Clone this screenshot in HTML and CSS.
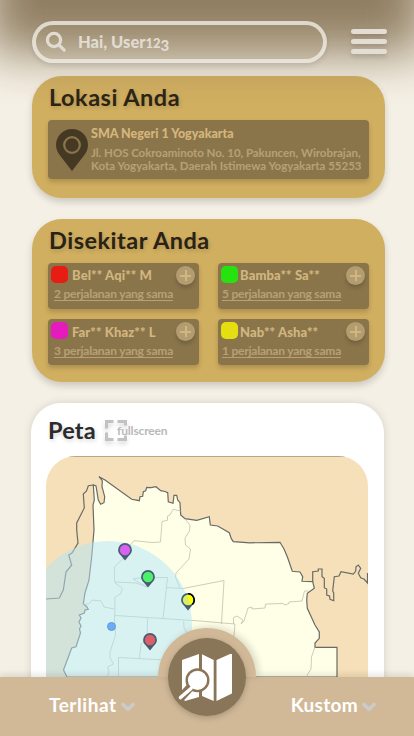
FILE: index.html
```html
<!DOCTYPE html>
<html lang="id">
<head>
<meta charset="utf-8">
<title>Peta</title>
<link rel="stylesheet" href="styles.css">
</head>
<body>
<div class="app">
  <header class="topbar">
    <div class="search">
      <svg width="22" height="22" viewBox="0 0 22 22" fill="none" stroke="currentColor" stroke-width="3.2" stroke-linecap="round"><circle cx="9" cy="9" r="6.6"/><path d="M14 14l5.2 5.2"/></svg>
      <span class="hello">Hai, User<span class="low-num">12</span><span class="drop-num">3</span></span>
    </div>
    <div class="burger"><i></i><i></i><i></i></div>
  </header>

  <section class="card location">
    <h2 class="t-lokasi">Lokasi Anda</h2>
    <div class="panel place">
      <svg class="place-pin" width="32" height="42" viewBox="0 0 32 42"><path d="M16 0C7 0 0 7 0 16c0 4 1.500 7 4 10.500L16 42l12-15.500c2.500-3.500 4-6.500 4-10.500C32 7 25 0 16 0z" fill="#463924"/><circle cx="16" cy="16" r="7.800" fill="none" stroke="#8a754b" stroke-width="2.200"/></svg>
      <div class="place-text">
        <b class="place-name">SMA Negeri 1 Yogyakarta</b>
        <span class="addr a1">Jl. HOS Cokroaminoto No. 10, Pakuncen, Wirobrajan,</span>
        <span class="addr a2">Kota Yogyakarta, Daerah Istimewa Yogyakarta 55253</span>
      </div>
    </div>
  </section>

  <section class="card nearby">
    <h2 class="t-sekitar">Disekitar Anda</h2>
    <div class="people">
      <div class="panel person"><div class="row"><i class="sw red"></i><b>Bel** Aqi** M</b><span class="plus"></span></div><u>2 perjalanan yang sama</u></div>
      <div class="panel person tight"><div class="row"><i class="sw green"></i><b>Bamba** Sa**</b><span class="plus"></span></div><u>5 perjalanan yang sama</u></div>
      <div class="panel person low"><div class="row"><i class="sw pink"></i><b>Far** Khaz** L</b><span class="plus"></span></div><u>3 perjalanan yang sama</u></div>
      <div class="panel person tight low"><div class="row"><i class="sw yellow"></i><b>Nab** Asha**</b><span class="plus"></span></div><u>1 perjalanan yang sama</u></div>
    </div>
  </section>

  <section class="mapcard">
    <div class="maphead">
      <h2 class="t-peta">Peta</h2>
      <svg class="full" width="22" height="22" viewBox="0 0 22 22" fill="none" stroke="#c2c2c2" stroke-width="3"><path d="M1.500 8.500v-7h7M12.500 1.500h8v4M1.500 12.500v7h7M12.500 19.500h8v-4"/></svg>
      <span class="fulltext">fullscreen</span>
    </div>
    <svg class="map" width="322" height="280" viewBox="46 456 322 280">
      <rect x="46" y="456" width="322" height="280" fill="#f6e0b9"/>
      <path class="land" d="M67 677L63.500 670 71.700 648 76 646.700 80.500 633 79.500 629 81 626 79 622 81 618 79.300 615 84.300 613 85 610 88.300 609.300 86.500 606.500 83.300 604 85 593 89 580 91.700 556.700 94 530 93 505 94.300 500 93.300 485 96 486 98.300 500 100.700 504.300 104 502.700 104.700 496.700 102 486.700 102.300 480.700 99 476.700 105 480 131.700 499.300 139.300 500.700 140 496.700 142.700 496.300 143.300 491.700 145.700 490.700 146.700 487.300 151 487.700 156 486.700 160.700 490.700 165 491.500 167.700 492.700 168.300 501.700 173 503.300 174 495.300 176.700 495.300 177.700 500 180 502.700 180.700 515 185 518.700 196.700 520.300 209.300 516.700 210.300 525 217.700 526 229.300 532.700 231.300 538.700 233.300 541.700 250 542.800 280 542.300 284 549 287.300 556.700 292.300 571.300 300 572 302.700 576.700 302 581.300 312.700 581.700 314.300 588.300 307.300 593.300 306.700 600 307.300 608.300 315 625 319.300 632 319.300 638.300 315 643 315 647.300 337 647.300V677z"/>
      <g class="border">
        <path d="M93.300 485L88.300 485.700 86.500 491 83.300 494 84.300 508 76.700 523 76.700 530 78 543 72 553 68.700 555 71.700 565 66 572 63.300 590 59.300 598 46 599"/>
        <path d="M312.700 581.700V571.700L318.300 571V569H322V576.700L324.300 578.300V587.700L326.700 589V595L329.500 596 330 599.300 333.700 600.700V593L332.700 591 334.300 576.700 339 576 341 571.700 353.300 574 355.700 571 356 566.700 358.300 565 360.700 568.300 358.300 573.300 360.700 577.700 364 579 367.500 583V573"/>
      </g>
      <g class="inner">
        <path d="M180.700 511L173 509.300 170 515 167.500 516V520.300L162 521.500 160.500 542 152 542.500 134 540.700 130 545M185 519L190 525 189.500 531 185 538 185.500 545 190.500 549 189 559 176 573 175.500 577 180 588M125 557L114.300 567 114.700 582.500 122.500 588.500 120.500 594 114.700 597.500 115 609 114.500 618 115.500 635 110 652 110 658 113.500 664 107.500 667 109 672 107 677M114.700 582L136 583 147 587 133 579 139 578 167.500 577.500 163 619M166.500 587.500L183 588.500 224 580.500 221.500 624M83 604L89 604 92 600 101 601 104 607 114 609M115 615.500L163 618.500 200 621 235 624 233.500 640M147.500 618.500L147 640 141 644 139.500 658M118.500 677V657.500L165 660M183.700 621L184 628 188 634M233.500 624V617.500L237 616 243 620 241 624 244 621 248 608 252 607 252 609 265 608 265.500 604 283 603.500 285 605 289 603.500V602L302 601 304.500 591 309 591M315 647L311.500 657 311 669 306 677"/>
      </g>
      <circle cx="108" cy="625" r="84" fill="#b1e5fa" fill-opacity=".5"/>
      <circle cx="111.500" cy="626.500" r="4" fill="#6dadf3" stroke="#5e9bdd"/>
      <defs><path id="pin" d="M0-6.900a6.900 6.900 0 0 0-6.900 6.900c0 2.700 1.500 4.300 2.800 5.500L0 10.500l4.100-5C5.400 4.300 6.900 2.700 6.900 0A6.900 6.900 0 0 0 0-6.900z"/></defs>
      <g fill="#455d70"><use href="#pin" x="125" y="550"/><use href="#pin" x="148" y="577"/><use href="#pin" x="188" y="600"/><use href="#pin" x="150" y="640"/></g>
      <path d="M188 593.900a6.100 6.100 0 0 1 4.200 10.500" fill="none" stroke="#000" stroke-width="1.800"/>
      <circle cx="125" cy="550" r="5.200" fill="#d960f0"/><circle cx="148" cy="577" r="5.200" fill="#4df06c"/><circle cx="188" cy="600" r="5.200" fill="#d6f169"/><path d="M187 594.900a5.200 5.200 0 0 1 3.500 9.600z" fill="#ff0"/><circle cx="150" cy="640" r="5.200" fill="#dc5e6b"/>
      <path d="M66 456.500H348" stroke="#b8a787" stroke-width="1"/>
    </svg>
  </section>
  <div class="haze"></div>

  <nav class="bottombar">
    <div class="tab"><span class="t-ter">Terlihat</span><svg width="14" height="10" viewBox="0 0 14 10"><path d="M2 2.500l5 4.800 5-4.800"/></svg></div>
    <div class="tab right"><span class="t-kus">Kustom</span><svg width="14" height="10" viewBox="0 0 14 10"><path d="M2 2.500l5 4.800 5-4.800"/></svg></div>
    <div class="hub"><div class="disc">
      <svg width="78" height="78" viewBox="168 638 78 78"><g fill="#fff"><path d="M182 660L199 654V697L185 701 182 698z"/><path d="M202 654.300L213.700 660V701L202 696z"/><path d="M216.500 660L230 654h2v39.500L216.500 701z"/></g><path d="M190.500 687L180 698.500" stroke="#897557" stroke-width="8.500"/><circle cx="197.500" cy="680.300" r="10.800" fill="#fff" stroke="#897557" stroke-width="2.400"/><path d="M191 688.500L180.500 697.500" stroke="#fff" stroke-width="3.600" stroke-linecap="round"/></svg>
    </div></div>
  </nav>
</div>
</body>
</html>
```
FILE: styles.css
```css
* { box-sizing: border-box; }
body { margin: 0; background: #f5f0e5; font-family: Lato, "Liberation Sans", sans-serif; font-weight: 700; }
.app { position: relative; width: 414px; height: 736px; overflow: hidden; }
h2 { margin: 0; font-size: 23.500px; line-height: 28px; color: #2a2215; text-shadow: 1px 2px 4px rgba(0,0,0,.16); white-space: nowrap; letter-spacing: .5px; }
span, b, u { white-space: nowrap; }

.topbar { position: relative; z-index: 3; height: 76px; padding: 21px 27px 0 32px; display: flex; justify-content: space-between; }
.search { width: 295px; height: 42px; border: 4px solid rgba(240,236,229,.8); border-radius: 21px; background: rgba(160,145,110,.2); box-shadow: 0 3px 5px rgba(0,0,0,.1); display: flex; align-items: center; padding-left: 9px; color: #e1dbd1; }
.hello { margin-left: 11px; font-size: 16.500px; line-height: 20px; font-weight: 900; }
.low-num { font-size: 13px; }
.drop-num { font-size: 15px; line-height: 10px; vertical-align: -3px; }
.burger { width: 36px; height: 25px; margin-top: 8px; display: flex; flex-direction: column; justify-content: space-between; filter: drop-shadow(0 3px 2px rgba(0,0,0,.12)); }
.burger i { height: 5px; border-radius: 2.500px; background: #e3ddd4; }

.haze { position: absolute; z-index: 2; left: -12px; right: -12px; top: -80px; height: 133px; background: #8a7759; opacity: .94; filter: blur(25px); pointer-events: none; }

.card { width: 353px; margin-left: 32px; padding: 7px 16px; border-radius: 30px; background: #d1af60; box-shadow: 0 4px 7px rgba(0,0,0,.16); }
.location { height: 122px; }
.nearby { height: 163px; margin-top: 21px; }
.panel { background: #8a754b; border-radius: 4px; box-shadow: 0 3px 5px rgba(0,0,0,.18); }
.location h2, .nearby h2 { margin-left: 1px; }
.place { height: 59px; margin-top: 9px; padding: 9px 0 0 8px; display: flex; }
.place-text { display: flex; flex-direction: column; margin: -3px 0 0 3px; align-items: flex-start; }
.place-name { font-size: 12.500px; line-height: 15px; color: #d5b67c; margin-bottom: 5px; }
.addr { font-size: 11.500px; line-height: 13px; color: #b8a075; }
.a1 { letter-spacing: -.04px; }
.people { margin-top: 9px; display: grid; grid-template-columns: 151px 151px; gap: 10px 19px; }
.person { height: 46px; padding: 3px 4px 0 3px; }
.row { display: flex; height: 20px; }
.row b { margin-left: 4px; font-size: 13px; line-height: 18px; color: #d2b67f; flex: 1; letter-spacing: .1px; }
.tight .row b { margin-left: 2px; }
.sw { width: 17px; height: 17px; border-radius: 5px; }
.red { background: #e71c12; } .green { background: #26e310; } .pink { background: #e51bbd; } .yellow { background: #e5df12; }
.plus { width: 19px; height: 19px; border-radius: 50%; box-shadow: 0 3px 4px rgba(0,0,0,.18); background: linear-gradient(#d2b67f,#d2b67f) center/11px 2px no-repeat, linear-gradient(#d2b67f,#d2b67f) center/2px 11px no-repeat, #b39d70; }
.person u { display: table; margin: 0 0 0 3px; font-size: 12px; line-height: 16px; color: #b8a075; letter-spacing: -.22px; text-underline-offset: 1.500px; }
.person.tight u { margin-left: 1px; }
.person.low .row b { padding-top: 1px; }
.person.low u { margin-top: 1px; }

.mapcard { width: 353px; height: 340px; margin: 21px 0 0 31px; padding: 13px 15px 0; background: #fff; border-radius: 30px 30px 0 0; box-shadow: 0 0 8px rgba(0,0,0,.13); }
.maphead { display: flex; height: 40px; padding-left: 2px; }
.maphead h2 { width: 48px; color: #2b2b2b; letter-spacing: .2px; }
.full { margin: 4px 0 0 9px; filter: drop-shadow(0 3px 2px rgba(0,0,0,.15)); }
.fulltext { margin: 7px 0 0 -10px; font-size: 12px; line-height: 16px; color: #b9b9b9; z-index: 1; letter-spacing: -.15px; }
.map { display: block; border-radius: 30px 30px 0 0; }
.land { fill: #ffffe8; stroke: #6a6a66; stroke-width: 1.200; }
.border { fill: none; stroke: #6a6a66; stroke-width: 1.200; }
.inner { fill: none; stroke: #bfc0ae; stroke-width: .800; }

.bottombar { position: absolute; z-index: 4; left: 0; right: 0; bottom: 0; height: 59px; background: #d1b998; box-shadow: 0 -3px 6px rgba(0,0,0,.1); display: flex; justify-content: space-between; padding: 15px 38px 0 49px; color: #fff; font-size: 19px; line-height: 26px; }
.t-ter { letter-spacing: .55px; }
.t-kus { letter-spacing: .3px; }
.tab { display: flex; }
.tab svg { margin: 10px 0 0 4px; fill: none; stroke: #cbcbcb; stroke-width: 3.600; stroke-linecap: round; stroke-linejoin: round; }
.hub { position: absolute; left: 158px; top: -49px; width: 98px; height: 98px; padding: 10px; border-radius: 50%; background: #d1b998; }
.hub::before { content: ""; position: absolute; inset: 0 0 49px; border-radius: 49px 49px 0 0; box-shadow: 3px -1px 7px rgba(0,0,0,.15); }
.disc { position: relative; width: 78px; height: 78px; border-radius: 50%; background: #897557; box-shadow: 0 2px 6px rgba(0,0,0,.2); }
.disc svg { display: block; }
```
